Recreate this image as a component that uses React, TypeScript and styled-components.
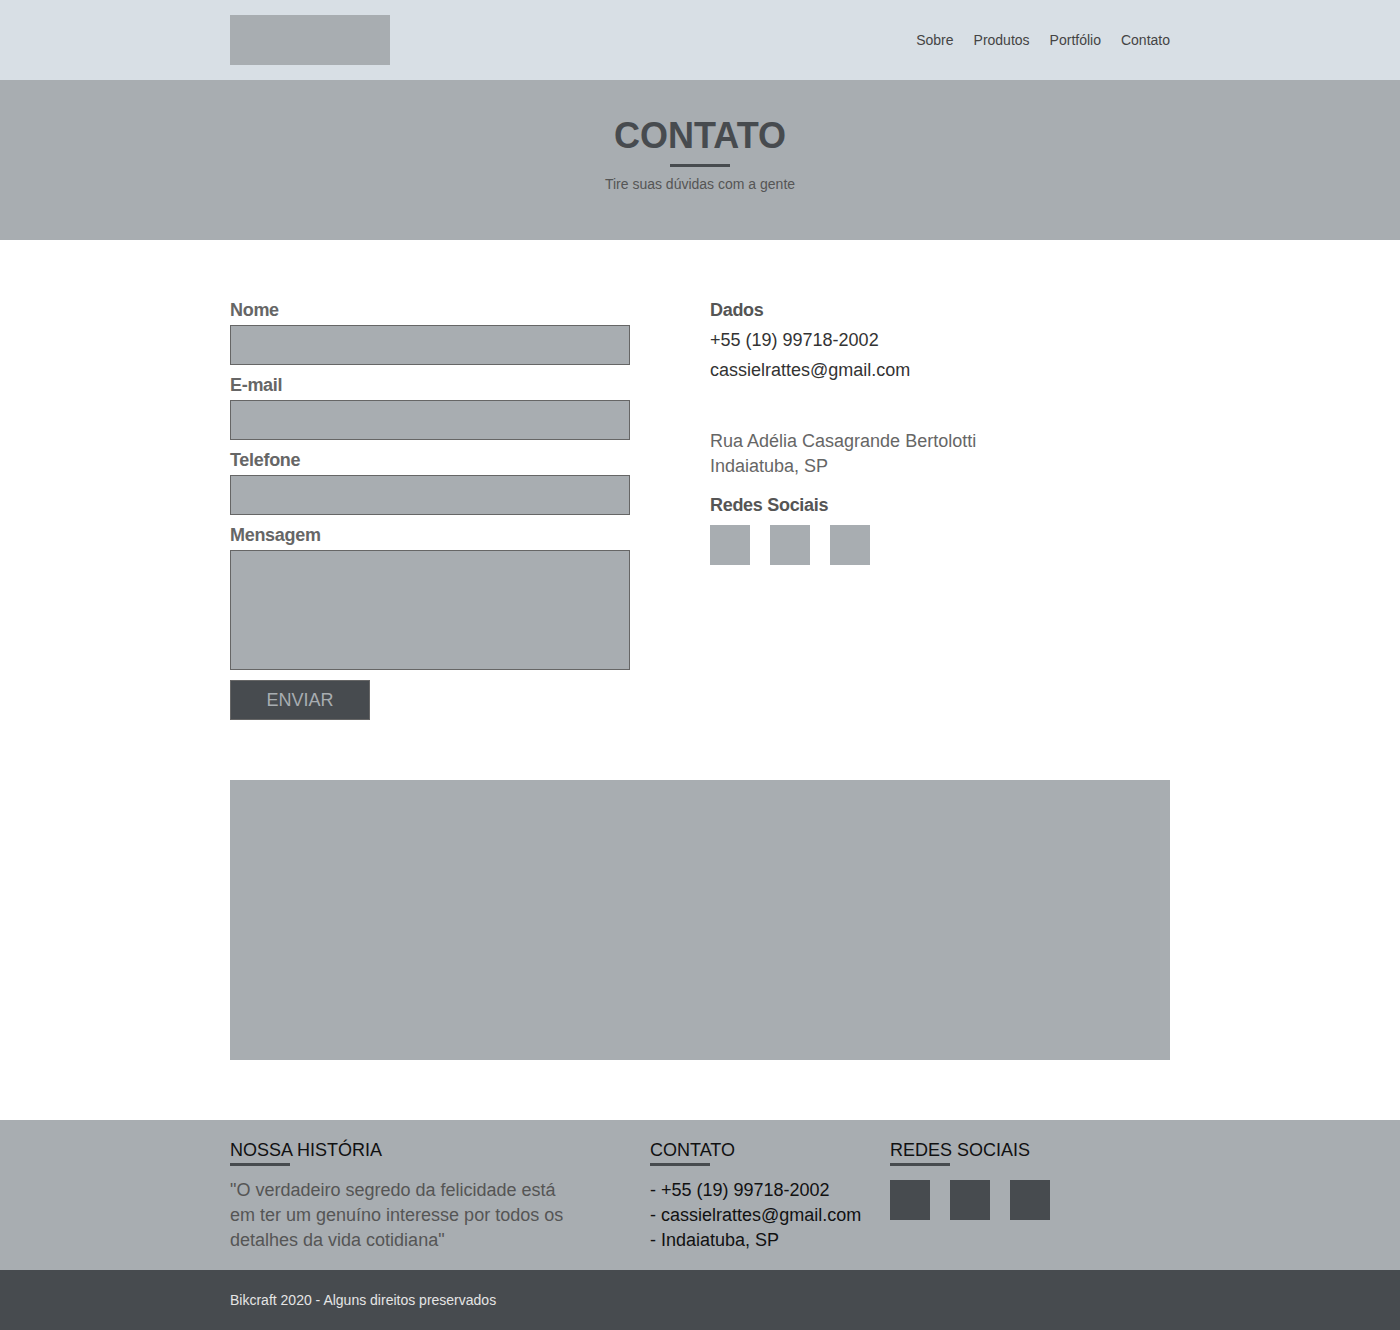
import React from 'react'
import styled, { createGlobalStyle } from 'styled-components'

const GRAY = '#a8adb1'
const DARK = '#474b4f'

const GlobalStyle = createGlobalStyle`
  * { box-sizing: border-box; }
  body {
    margin: 0;
    font-family: "Liberation Sans", Arial, sans-serif;
    background: #fff;
  }
  h1, h2, h3, p, ul { margin: 0; padding: 0; }
  ul { list-style: none; }
`

const Container = styled.div`
  width: 940px;
  margin: 0 auto;
`

const Header = styled.header`
  background: #d8dfe5;
  height: 80px;
`

const HeaderInner = styled(Container)`
  display: flex;
  align-items: center;
  justify-content: space-between;
  height: 100%;
`

const Logo = styled.div`
  width: 160px;
  height: 50px;
  background: ${GRAY};
`

const Nav = styled.nav`
  display: flex;
  gap: 20px;
  a {
    font-size: 14px;
    color: #444;
    text-decoration: none;
  }
`

const Hero = styled.section`
  background: ${GRAY};
  height: 160px;
  display: flex;
  flex-direction: column;
  align-items: center;
  padding-top: 36px;
`

const HeroTitle = styled.h1`
  font-size: 36px;
  line-height: 40px;
  font-weight: bold;
  color: ${DARK};
`

const Bar = styled.span<{ $color?: string }>`
  display: block;
  width: 60px;
  height: 3px;
  background: ${p => p.$color || DARK};
`

const HeroBar = styled(Bar)`
  margin-top: 8px;
`

const HeroSub = styled.p`
  margin-top: 9px;
  font-size: 14px;
  color: #555;
`

const Main = styled(Container)`
  padding: 60px 0;
`

const ContactGrid = styled.div`
  display: grid;
  grid-template-columns: 400px 1fr;
  column-gap: 80px;
`

const Form = styled.form`
  display: flex;
  flex-direction: column;
`

const Label = styled.label`
  font-size: 18px;
  line-height: 20px;
  margin-bottom: 5px;
  font-weight: bold;
  color: #666;
  letter-spacing: -0.3px;
`

const Field = styled.input`
  display: block;
  width: 400px;
  height: 40px;
  background: ${GRAY};
  border: 1px solid #666;
  margin-bottom: 10px;
  font: inherit;
`

const Area = styled.textarea`
  display: block;
  width: 400px;
  height: 120px;
  background: ${GRAY};
  border: 1px solid #666;
  margin-bottom: 10px;
  resize: none;
  font: inherit;
`

const Button = styled.button`
  width: 140px;
  height: 40px;
  background: ${DARK};
  border: 1px solid #666;
  color: #a8adb1;
  font-family: "Liberation Sans", Arial, sans-serif;
  font-size: 18px;
  cursor: pointer;
`

const Info = styled.div`
  display: flex;
  flex-direction: column;
`

const InfoTitle = styled.h3<{ $top?: number }>`
  font-size: 18px;
  line-height: 20px;
  font-weight: bold;
  color: #555;
  letter-spacing: -0.3px;
  margin-top: ${p => p.$top || 0}px;
  margin-bottom: 5px;
`

const InfoLine = styled.p`
  font-size: 18px;
  line-height: 30px;
  color: #333;
`

const Address = styled.p`
  margin-top: 44px;
  font-size: 18px;
  line-height: 25px;
  color: #666;
`

const Squares = styled.div<{ $top?: number }>`
  display: flex;
  gap: 20px;
  margin-top: ${p => p.$top || 0}px;
`

const Square = styled.a<{ $color: string }>`
  display: block;
  width: 40px;
  height: 40px;
  background: ${p => p.$color};
`

const Map = styled.div`
  margin-top: 60px;
  height: 280px;
  background: ${GRAY};
`

const Footer = styled.footer`
  background: ${GRAY};
  padding: 20px 0;
  height: 150px;
`

const FooterGrid = styled(Container)`
  display: grid;
  grid-template-columns: 420px 240px 1fr;
`

const FooterTitle = styled.h3`
  font-size: 18px;
  line-height: 20px;
  font-weight: normal;
  color: #111;
`

const FooterBar = styled(Bar)`
  margin-top: 3px;
  margin-bottom: 12px;
`

const Quote = styled.p`
  font-size: 18px;
  line-height: 25px;
  color: #555;
  max-width: 345px;
`

const FooterList = styled.ul`
  li {
    font-size: 18px;
    line-height: 25px;
    color: #111;
  }
`

const Copy = styled.div`
  background: ${DARK};
  height: 60px;
  display: flex;
  align-items: center;
  p {
    font-size: 14px;
    color: #e5e5e5;
  }
`

export default function App() {
  return (
    <>
      <GlobalStyle />
      <Header>
        <HeaderInner>
          <Logo />
          <Nav>
            <a href="#">Sobre</a>
            <a href="#">Produtos</a>
            <a href="#">Portfólio</a>
            <a href="#">Contato</a>
          </Nav>
        </HeaderInner>
      </Header>

      <Hero>
        <HeroTitle>CONTATO</HeroTitle>
        <HeroBar />
        <HeroSub>Tire suas dúvidas com a gente</HeroSub>
      </Hero>

      <Main>
        <ContactGrid>
          <Form onSubmit={e => e.preventDefault()}>
            <Label htmlFor="nome">Nome</Label>
            <Field id="nome" type="text" />
            <Label htmlFor="email">E-mail</Label>
            <Field id="email" type="email" />
            <Label htmlFor="telefone">Telefone</Label>
            <Field id="telefone" type="text" />
            <Label htmlFor="mensagem">Mensagem</Label>
            <Area id="mensagem" />
            <Button type="submit">ENVIAR</Button>
          </Form>

          <Info>
            <InfoTitle>Dados</InfoTitle>
            <InfoLine>+55 (19) 99718-2002</InfoLine>
            <InfoLine>cassielrattes@gmail.com</InfoLine>
            <Address>
              Rua Adélia Casagrande Bertolotti
              <br />
              Indaiatuba, SP
            </Address>
            <InfoTitle $top={16}>Redes Sociais</InfoTitle>
            <Squares $top={5}>
              <Square $color={GRAY} />
              <Square $color={GRAY} />
              <Square $color={GRAY} />
            </Squares>
          </Info>
        </ContactGrid>

        <Map />
      </Main>

      <Footer>
        <FooterGrid>
          <div>
            <FooterTitle>NOSSA HISTÓRIA</FooterTitle>
            <FooterBar />
            <Quote>"O verdadeiro segredo da felicidade está em ter um genuíno interesse por todos os detalhes da vida cotidiana"</Quote>
          </div>
          <div>
            <FooterTitle>CONTATO</FooterTitle>
            <FooterBar />
            <FooterList>
              <li>- +55 (19) 99718-2002</li>
              <li>- cassielrattes@gmail.com</li>
              <li>- Indaiatuba, SP</li>
            </FooterList>
          </div>
          <div>
            <FooterTitle>REDES SOCIAIS</FooterTitle>
            <FooterBar />
            <Squares $top={14}>
              <Square $color={DARK} />
              <Square $color={DARK} />
              <Square $color={DARK} />
            </Squares>
          </div>
        </FooterGrid>
      </Footer>

      <Copy>
        <Container>
          <p>Bikcraft 2020 - Alguns direitos preservados</p>
        </Container>
      </Copy>
    </>
  )
}
